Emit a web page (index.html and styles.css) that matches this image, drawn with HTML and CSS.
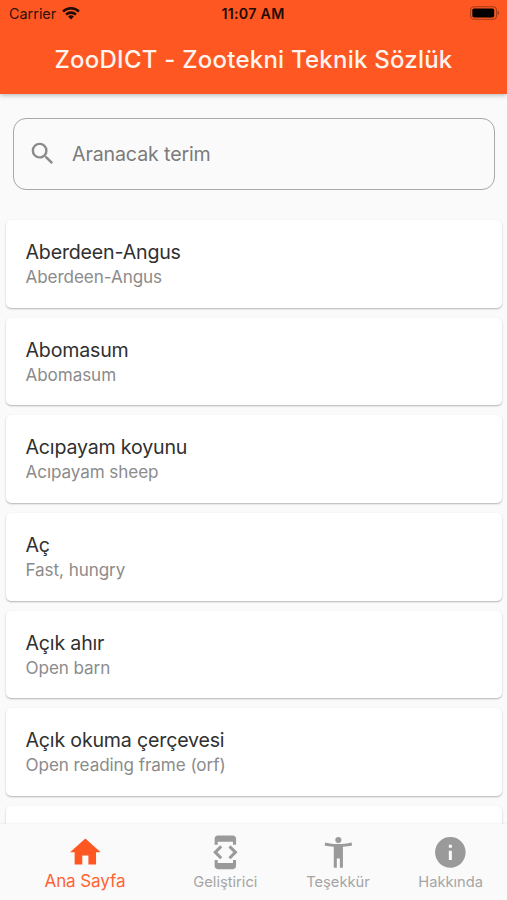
FILE: index.html
```html
<!DOCTYPE html>
<html lang="tr">
<head>
<meta charset="utf-8">
<title>ZooDICT</title>
<link rel="stylesheet" href="styles.css">
</head>
<body>
<header class="header">
  <div class="status">
    <div class="carrier"><span class="carrier-name">Carrier</span>
      <svg class="wifi" viewBox="0 0 18 14"><path d="M9 13.600 6.100 10.600a4.100 4.100 0 0 1 5.800 0zM3.200 7.700a8.200 8.200 0 0 1 11.600 0l-1.700 1.900a5.800 5.800 0 0 0-8.200 0zM.2 4.700a12.400 12.400 0 0 1 17.600 0l-1.700 1.800a10.100 10.100 0 0 0-14.200 0z"/></svg>
    </div>
    <span class="time">11:07 AM</span>
    <svg class="battery" viewBox="0 0 31 14"><rect class="case" x=".6" y=".6" width="26.8" height="12.8" rx="3.6"/><rect x="2.400" y="2.400" width="22.600" height="9.200" rx="1.800"/><path class="tip" d="M28.600 4.800c2 .7 2 3.700 0 4.400z"/></svg>
  </div>
  <h1 class="title">ZooDICT - Zootekni Teknik Sözlük</h1>
</header>
<main class="content">
  <label class="search">
    <svg class="search-icon" viewBox="0 0 24 24"><path d="M15.500 14h-.79l-.28-.27A6.470 6.470 0 0 0 16 9.500 6.500 6.500 0 1 0 9.500 16c1.610 0 3.090-.59 4.230-1.570l.27.28v.79l5 4.990L20.490 19zm-6 0C7.010 14 5 11.990 5 9.500S7.010 5 9.500 5 14 7.010 14 9.500 11.990 14 9.500 14z"/></svg>
    <span class="hint">Aranacak terim</span>
  </label>
  <div class="list">
    <article class="card"><h2 class="term">Aberdeen-Angus</h2><p class="meaning">Aberdeen-Angus</p></article>
    <article class="card"><h2 class="term">Abomasum</h2><p class="meaning">Abomasum</p></article>
    <article class="card"><h2 class="term">Acıpayam koyunu</h2><p class="meaning">Acıpayam sheep</p></article>
    <article class="card"><h2 class="term">Aç</h2><p class="meaning">Fast, hungry</p></article>
    <article class="card"><h2 class="term">Açık ahır</h2><p class="meaning">Open barn</p></article>
    <article class="card"><h2 class="term">Açık okuma çerçevesi</h2><p class="meaning">Open reading frame (orf)</p></article>
    <article class="card"></article>
  </div>
</main>
<nav class="nav">
  <a class="tab active"><svg class="icon" viewBox="0 0 24 24"><path d="M10 20v-6h4v6h5v-8h3L12 3 2 12h3v8z"/></svg><span>Ana Sayfa</span></a>
  <a class="tab"><svg class="icon" viewBox="0 0 24 24"><path d="M7 5h10v2h2V3c0-1.100-.9-1.990-2-1.990L7 1c-1.100 0-2 .9-2 2v4h2V5zm8.410 11.590L20 12l-4.590-4.590L14 8.830 17.170 12 14 15.170l1.410 1.420zM10 15.170 6.830 12 10 8.830 8.590 7.410 4 12l4.590 4.590L10 15.170zM17 19H7v-2H5v4c0 1.100.9 2 2 2h10c1.100 0 2-.9 2-2v-4h-2v2z"/></svg><span>Geliştirici</span></a>
  <a class="tab"><svg class="icon" viewBox="0 0 24 24"><circle cx="12" cy="4" r="2"/><path d="M20.650 5.500c-3.150.75-5.650 1-8.650 1s-5.500-.25-8.650-1L3 7.500c1.700.45 4 .7 6 .8V22h2v-6h2v6h2V8.300c2-.1 4.300-.35 6-.8z"/></svg><span>Teşekkür</span></a>
  <a class="tab"><svg class="icon" viewBox="0 0 24 24"><path d="M12 2a10 10 0 1 0 0 20 10 10 0 0 0 0-20zm1 15h-2v-6h2v6zm0-8h-2V7h2v2z"/></svg><span>Hakkında</span></a>
</nav>
</body>
</html>
```
FILE: styles.css
```css
* { box-sizing: border-box; }
body {
  margin: 0;
  height: 900px;
  overflow: hidden;
  display: flex;
  flex-direction: column;
  background: #fafafa;
  font-family: Inter, "Liberation Sans", sans-serif;
}
h1, h2, p { margin: 0; font-weight: 400; }
.header {
  flex: none;
  height: 94px;
  background: #ff5722;
  box-shadow: 0 1px 5px rgba(0, 0, 0, .3);
  z-index: 1;
}
.status {
  height: 26px;
  padding: 0 7px 0 9px;
  display: grid;
  grid-template-columns: 1fr auto 1fr;
  align-items: center;
  color: #30100a;
  font-size: 14.4px;
}
.carrier { display: flex; align-items: center; gap: 6px; padding-top: 1px; }
.wifi { width: 18px; height: 14px; fill: #200b05; margin-top: -2px; }
.time { font-weight: 600; font-size: 14.2px; letter-spacing: .3px; margin: 0 1px 0 -2px; color: #200b05; padding-top: 1px; }
.battery { width: 30px; height: 14px; justify-self: end; }
.case { fill: none; stroke: #a63b19; stroke-width: 1.1; }
.tip { fill: #a63b19; }
.title {
  text-align: center;
  font-size: 24px;
  line-height: 68px;
  font-weight: 500;
  letter-spacing: .23px;
  color: #fff3ee;
}
.content { flex: 1; min-height: 0; overflow: hidden; }
.search {
  margin: 24px 12px 30px 13px;
  height: 72px;
  border: 1.3px solid #a8a8a8;
  border-radius: 13px;
  display: flex;
  align-items: center;
  padding-left: 14px;
}
.search-icon { width: 29.4px; height: 29.4px; fill: #8b8b8b; }
.hint { margin-left: 14.6px; font-size: 19.6px; letter-spacing: -.12px; color: #7b7b7b; }
.list {
  padding: 0 5px 0 5.5px;
  display: flex;
  flex-direction: column;
  gap: 10.2px;
}
.card {
  flex: none;
  height: 87.5px;
  padding: 19px 20px;
  border-radius: 5px;
  background: #fff;
  box-shadow: 0 1px 1.5px rgba(0, 0, 0, .22), 0 1px 3px rgba(0, 0, 0, .08);
}
.term { font-size: 19.6px; line-height: 26px; letter-spacing: -.18px; color: #303030; }
.meaning { font-size: 17.1px; line-height: 24px; letter-spacing: -.08px; color: #8b8b8b; }
.nav {
  flex: none;
  height: 76px;
  display: flex;
  background: #fafafa;
  box-shadow: 0 -1px 2px rgba(0, 0, 0, .05);
  z-index: 1;
}
.tab {
  flex: 1;
  display: flex;
  flex-direction: column;
  align-items: center;
  padding-top: 10px;
  font-size: 14.7px;
  line-height: 20px;
  color: #a5a5a5;
}
.tab span { margin-top: 1.5px; }
.icon { width: 36.7px; height: 36.7px; fill: #9a9a9a; }
.active { flex: none; width: 33.333%; padding-left: 1px; color: #ff6334; font-size: 17.1px; letter-spacing: -.12px; }
.active span { margin-top: 0; }
.active .icon { fill: #ff5722; }
```
